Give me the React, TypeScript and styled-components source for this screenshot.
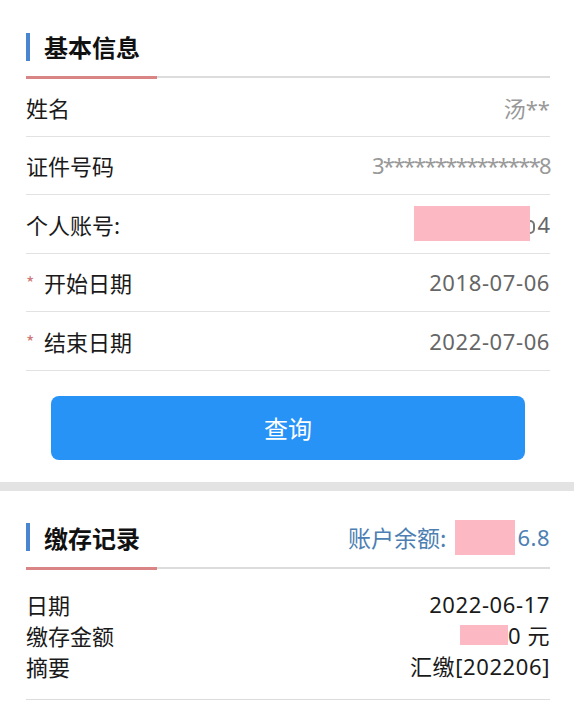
import React from "react";
import styled, { createGlobalStyle } from "styled-components";

const GlobalStyle = createGlobalStyle`
   body {
      margin: 0;
      background: #ffffff;
      font-family: "Noto Sans CJK SC", "Noto Sans", sans-serif;
      color: #222;
   }
`;

const Page = styled.div`
   width: 574px;
   background: #fff;
`;

const Section = styled.section`
   padding: 17px 24px 0 26px;
`;

const Header = styled.div`
   display: flex;
   align-items: center;
   justify-content: space-between;
   height: 59px;
`;

const Title = styled.h2`
   display: flex;
   align-items: center;
   margin: 0;
   font-size: 24px;
   font-weight: 700;
   color: #111;

   &::before {
      content: "";
      width: 4px;
      height: 28px;
      background: #4a86cf;
      margin-right: 14px;
   }
`;

const Rule = styled.div`
   height: 2px;
   display: flex;
   align-items: flex-start;
   background: #dcdcdc;

   &::before {
      content: "";
      width: 131px;
      height: 3px;
      background: #d98585;
   }
`;

const Row = styled.div`
   display: flex;
   align-items: center;
   justify-content: space-between;
   height: 57.5px;
   border-bottom: 1px solid #e2e2e2;
   font-size: 22px;
`;

const Label = styled.span`
   display: flex;
   align-items: center;
   color: #1a1a1a;
`;

const Star = styled.span`
   color: #cf7a7a;
   font-size: 18px;
   width: 18px;
`;

const Value = styled.span<{ $tone?: "light" | "mid"; $spacing?: number }>`
   display: flex;
   align-items: center;
   color: ${({ $tone }) => ($tone === "light" ? "#999" : "#666")};
   font-family: "Noto Sans", "Noto Sans CJK SC", sans-serif;
   letter-spacing: ${({ $spacing = 0 }) => $spacing}px;
`;

const Mask = styled.span<{ $w: number; $h: number; $gap?: number }>`
   display: inline-block;
   width: ${({ $w }) => $w}px;
   height: ${({ $h }) => $h}px;
   margin-right: ${({ $gap = 0 }) => $gap}px;
   background: #fdb9c3;
`;

const Sliver = styled.span`
   display: inline-block;
   width: 3px;
   height: 10px;
   margin: 6px 2px 0 0;
   border: 2px solid #777;
   border-left: none;
   border-radius: 0 5px 5px 0;
`;

const ButtonWrap = styled.div`
   padding: 25px 49px 22px 51px;
`;

const QueryButton = styled.button`
   display: block;
   width: 100%;
   height: 64px;
   border: none;
   border-radius: 8px;
   background: #2893f7;
   color: #fff;
   font-family: "Noto Sans CJK SC", sans-serif;
   font-size: 24px;
   cursor: pointer;
`;

const Band = styled.div`
   height: 9px;
   background: #e3e3e3;
`;

const Balance = styled.span`
   display: flex;
   align-items: center;
   font-size: 23px;
   color: #4d7fb3;
`;

const BalanceLabel = styled.span`
   margin-right: 9px;
`;

const Digits = styled.span`
   font-family: "Noto Sans", sans-serif;
   font-size: 22px;
   letter-spacing: 0.5px;
`;

const Record = styled.div`
   padding: 20px 0 17px;
   border-bottom: 1px solid #dcdcdc;
`;

const Line = styled.div`
   display: flex;
   justify-content: space-between;
   align-items: center;
   line-height: 31px;
   font-size: 22px;
   color: #1a1a1a;
`;

const LineValue = styled.span`
   display: flex;
   align-items: center;
   font-family: "Noto Sans", "Noto Sans CJK SC", sans-serif;
   letter-spacing: 0.6px;
`;

const info = [
   { label: "姓名", value: "汤**", spacing: 0 },
   { label: "证件号码", value: "3***************8", spacing: -1.7 },
];

const dates = [
   { label: "开始日期", value: "2018-07-06" },
   { label: "结束日期", value: "2022-07-06" },
];

export default function App() {
   return (
      <Page>
         <GlobalStyle />
         <Section>
            <Header>
               <Title>基本信息</Title>
            </Header>
            <Rule />
            {info.map((item) => (
               <Row key={item.label}>
                  <Label>{item.label}</Label>
                  <Value $tone="light" $spacing={item.spacing}>
                     {item.value}
                  </Value>
               </Row>
            ))}
            <Row>
               <Label>个人账号:</Label>
               <Value $tone="mid">
                  <Mask $w={116} $h={35} />
                  <Sliver />4
               </Value>
            </Row>
            {dates.map((item) => (
               <Row key={item.label}>
                  <Label>
                     <Star>*</Star>
                     {item.label}
                  </Label>
                  <Value $tone="mid" $spacing={0.6}>
                     {item.value}
                  </Value>
               </Row>
            ))}
         </Section>
         <ButtonWrap>
            <QueryButton>查询</QueryButton>
         </ButtonWrap>
         <Band />
         <Section>
            <Header>
               <Title>缴存记录</Title>
               <Balance>
                  <BalanceLabel>账户余额:</BalanceLabel>
                  <Mask $w={60} $h={35} $gap={2} />
                  <Digits>6.8</Digits>
               </Balance>
            </Header>
            <Rule />
            <Record>
               <Line>
                  <span>日期</span>
                  <LineValue>2022-06-17</LineValue>
               </Line>
               <Line>
                  <span>缴存金额</span>
                  <LineValue>
                     <Mask $w={48} $h={20} />0 元
                  </LineValue>
               </Line>
               <Line>
                  <span>摘要</span>
                  <LineValue>汇缴[202206]</LineValue>
               </Line>
            </Record>
         </Section>
      </Page>
   );
}
